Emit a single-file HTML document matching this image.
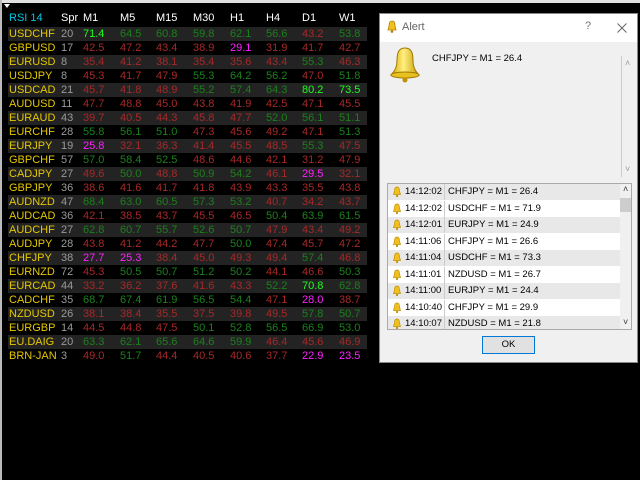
<!DOCTYPE html>
<html><head><style>
*{margin:0;padding:0;box-sizing:border-box}
body{width:640px;height:480px;background:#000;position:relative;overflow:hidden;font-family:"Liberation Sans",Arial,sans-serif;font-size:11px}
.t{position:absolute;white-space:nowrap}
.row{position:absolute;left:8px;width:359px;height:14px}
.s{background:#232323}
.c{position:absolute;top:0;line-height:14px;font-size:11px}
.y{color:#e6c800}.g{color:#1b801b}.bg{color:#1eff1e}.r{color:#a82828}.m{color:#ff20ff}.gr{color:#9a9a9a}
.dlg{position:absolute;left:379px;top:13px;width:259px;height:350px;background:#f0f0f0;border:1px solid #888}
.tb{position:absolute;left:0;top:0;width:257px;height:28px;background:#fff}
.lst{position:absolute;left:7px;top:169px;width:245px;height:147px;background:#fff;border:1px solid #aaa;overflow:hidden}
.li{position:absolute;left:0;width:232px;height:16.4px;font-size:9.5px;line-height:16px;color:#000}
.li.a{background:#e8e8e8}
.li span{position:absolute}
.li svg{position:absolute;left:4px;top:2px}
</style></head><body>
<div style="position:absolute;left:0;top:0;width:640px;height:3px;background:#e0e0e0"></div>
<div style="position:absolute;left:0;top:0;width:2px;height:480px;background:#bbb"></div>
<div style="position:absolute;left:4px;top:4px;width:0;height:0;border-left:3px solid transparent;border-right:3px solid transparent;border-top:4px solid #fff"></div>
<div class="t" style="left:9px;top:12px;color:#00c8e6;font-size:11px">RSI 14</div>
<div class="t" style="left:61px;top:12px;color:#fff;font-size:11px">Spr</div>
<div class="t" style="left:83px;top:12px;color:#fff;font-size:11px">M1</div>
<div class="t" style="left:120px;top:12px;color:#fff;font-size:11px">M5</div>
<div class="t" style="left:156px;top:12px;color:#fff;font-size:11px">M15</div>
<div class="t" style="left:193px;top:12px;color:#fff;font-size:11px">M30</div>
<div class="t" style="left:230px;top:12px;color:#fff;font-size:11px">H1</div>
<div class="t" style="left:266px;top:12px;color:#fff;font-size:11px">H4</div>
<div class="t" style="left:302px;top:12px;color:#fff;font-size:11px">D1</div>
<div class="t" style="left:339px;top:12px;color:#fff;font-size:11px">W1</div>
<div id="tbl"></div>
<script>
var d=[
["USDCHF",20,"71.4 bg","64.5 g","60.8 g","59.8 g","62.1 g","56.6 g","43.2 r","53.8 g"],
["GBPUSD",17,"42.5 r","47.2 r","43.4 r","38.9 r","29.1 m","31.9 r","41.7 r","42.7 r"],
["EURUSD",8,"35.4 r","41.2 r","38.1 r","35.4 r","35.6 r","43.4 r","55.3 g","46.3 r"],
["USDJPY",8,"45.3 r","41.7 r","47.9 r","55.3 g","64.2 g","56.2 g","47.0 r","51.8 g"],
["USDCAD",21,"45.7 r","41.8 r","48.9 r","55.2 g","57.4 g","64.3 g","80.2 bg","73.5 bg"],
["AUDUSD",11,"47.7 r","48.8 r","45.0 r","43.8 r","41.9 r","42.5 r","47.1 r","45.5 r"],
["EURAUD",43,"39.7 r","40.5 r","44.3 r","45.8 r","47.7 r","52.0 g","56.1 g","51.1 g"],
["EURCHF",28,"55.8 g","56.1 g","51.0 g","47.3 r","45.6 r","49.2 r","47.1 r","51.3 g"],
["EURJPY",19,"25.8 m","32.1 r","36.3 r","41.4 r","45.5 r","48.5 r","55.3 g","47.5 r"],
["GBPCHF",57,"57.0 g","58.4 g","52.5 g","48.6 r","44.6 r","42.1 r","31.2 r","47.9 r"],
["CADJPY",27,"49.6 r","50.0 g","48.8 r","50.9 g","54.2 g","46.1 r","29.5 m","32.1 r"],
["GBPJPY",36,"38.6 r","41.6 r","41.7 r","41.8 r","43.9 r","43.3 r","35.5 r","43.8 r"],
["AUDNZD",47,"68.4 g","63.0 g","60.5 g","57.3 g","53.2 g","40.7 r","34.2 r","43.7 r"],
["AUDCAD",36,"42.1 r","38.5 r","43.7 r","45.5 r","46.5 r","50.4 g","63.9 g","61.5 g"],
["AUDCHF",27,"62.8 g","60.7 g","55.7 g","52.6 g","50.7 g","47.9 r","43.4 r","49.2 r"],
["AUDJPY",28,"43.8 r","41.2 r","44.2 r","47.7 r","50.0 g","47.4 r","45.7 r","47.2 r"],
["CHFJPY",38,"27.7 m","25.3 m","38.4 r","45.0 r","49.3 r","49.4 r","57.4 g","46.8 r"],
["EURNZD",72,"45.3 r","50.5 g","50.7 g","51.2 g","50.2 g","44.1 r","46.6 r","50.3 g"],
["EURCAD",44,"33.2 r","36.2 r","37.6 r","41.6 r","43.3 r","52.2 g","70.8 bg","62.8 g"],
["CADCHF",35,"68.7 g","67.4 g","61.9 g","56.5 g","54.4 g","47.1 r","28.0 m","38.7 r"],
["NZDUSD",26,"38.1 r","38.4 r","35.5 r","37.5 r","39.8 r","49.5 r","57.8 g","50.7 g"],
["EURGBP",14,"44.5 r","44.8 r","47.5 r","50.1 g","52.8 g","56.5 g","66.9 g","53.0 g"],
["EU.DAIG",20,"63.3 g","62.1 g","65.6 g","64.6 g","59.9 g","46.4 r","45.6 r","46.9 r"],
["BRN-JAN",3,"49.0 r","51.7 g","44.4 r","40.5 r","40.6 r","37.7 r","22.9 m","23.5 m"]];
var xs=[75,112,148,185,222,258,294,331],h="";
d.forEach(function(r,i){h+='<div class="row'+(i%2==0?' s':'')+'" style="top:'+(27+i*14)+'px">';
h+='<div class="c y" style="left:1px">'+r[0]+'</div><div class="c gr" style="left:53px">'+r[1]+'</div>';
for(var j=0;j<8;j++){var p=r[j+2].split(' ');h+='<div class="c '+p[1]+'" style="left:'+xs[j]+'px">'+p[0]+'</div>';}
h+='</div>';});
document.getElementById('tbl').innerHTML=h;
</script>
<div class="dlg">
<div class="tb">
<svg style="position:absolute;left:6px;top:6px" width="12" height="14" viewBox="0 0 12 14"><path d="M6 1C3.5 1 3 3 3 6L2 10H10L9 6C9 3 8.5 1 6 1Z" fill="#f0c020" stroke="#b08000" stroke-width=".8"/><circle cx="6" cy="11.5" r="1.3" fill="#b08000"/></svg>
<div class="t" style="left:22px;top:7px;color:#666;font-size:11px">Alert</div>
<div class="t" style="left:205px;top:6px;color:#777;font-size:11px">?</div>
<svg style="position:absolute;left:237px;top:9px" width="10" height="10" viewBox="0 0 10 10"><path d="M0.5 0.5L9.5 9.5M9.5 0.5L0.5 9.5" stroke="#666" stroke-width="1"/></svg>
</div>
<svg style="position:absolute;left:9px;top:32px" width="32" height="38" viewBox="0 0 32 38"><defs><linearGradient id="gb" x1="0" x2="1"><stop offset="0" stop-color="#d8a800"/><stop offset=".45" stop-color="#fff080"/><stop offset="1" stop-color="#c89800"/></linearGradient></defs><path d="M16 2C9 2 8 8 8 15C8 22 5 26 2 29H30C27 26 24 22 24 15C24 8 23 2 16 2Z" fill="url(#gb)" stroke="#a07800"/><ellipse cx="16" cy="29" rx="14" ry="3" fill="#e8c020" stroke="#a07800"/><circle cx="16" cy="34" r="2.5" fill="#c09000"/></svg>
<div class="t" style="left:52px;top:39px;color:#000;font-size:9.5px">CHFJPY = M1 = 26.4</div>
<div style="position:absolute;left:241px;top:42px;width:1px;height:121px;background:#ccc"></div>
<div class="t" style="left:245px;top:44px;color:#999;font-size:9px">˄</div>
<div class="t" style="left:245px;top:150px;color:#999;font-size:9px">˅</div>
<div class="lst">
<script>
var L=[["14:12:02","CHFJPY = M1 = 26.4"],["14:12:02","USDCHF = M1 = 71.9"],["14:12:01","EURJPY = M1 = 24.9"],["14:11:06","CHFJPY = M1 = 26.6"],["14:11:04","USDCHF = M1 = 73.3"],["14:11:01","NZDUSD = M1 = 26.7"],["14:11:00","EURJPY = M1 = 24.4"],["14:10:40","CHFJPY = M1 = 29.9"],["14:10:07","NZDUSD = M1 = 21.8"]],s="";
var bell='<svg width="10" height="12" viewBox="0 0 10 12"><path d="M5 1C3 1 2.5 2.5 2.5 5L1.5 8.5H8.5L7.5 5C7.5 2.5 7 1 5 1Z" fill="#f0c020" stroke="#c09000" stroke-width=".7"/><circle cx="5" cy="10" r="1.1" fill="#c09000"/></svg>';
L.forEach(function(r,i){s+='<div class="li'+(i%2==0?' a':'')+'" style="top:'+(i*16.5)+'px">'+bell+'<span style="left:17px">'+r[0]+'</span><span style="left:56px;top:0;width:1px;height:16px;background:#ccc"></span><span style="left:60px">'+r[1]+'</span></div>';});
document.write(s);
</script>
<div style="position:absolute;left:232px;top:0;width:12px;height:145px;background:#f0f0f0"></div>
<div style="position:absolute;left:232px;top:14px;width:12px;height:14px;background:#cdcdcd"></div>
<div class="t" style="left:235px;top:0px;color:#333;font-size:9px">˄</div>
<div class="t" style="left:235px;top:133px;color:#333;font-size:9px">˅</div>
</div>
<div style="position:absolute;left:102px;top:322px;width:53px;height:18px;background:#e1e1e1;border:1px solid #0078d7;font-size:9.5px;text-align:center;line-height:16px;color:#000">OK</div>
</div>
</body></html>
